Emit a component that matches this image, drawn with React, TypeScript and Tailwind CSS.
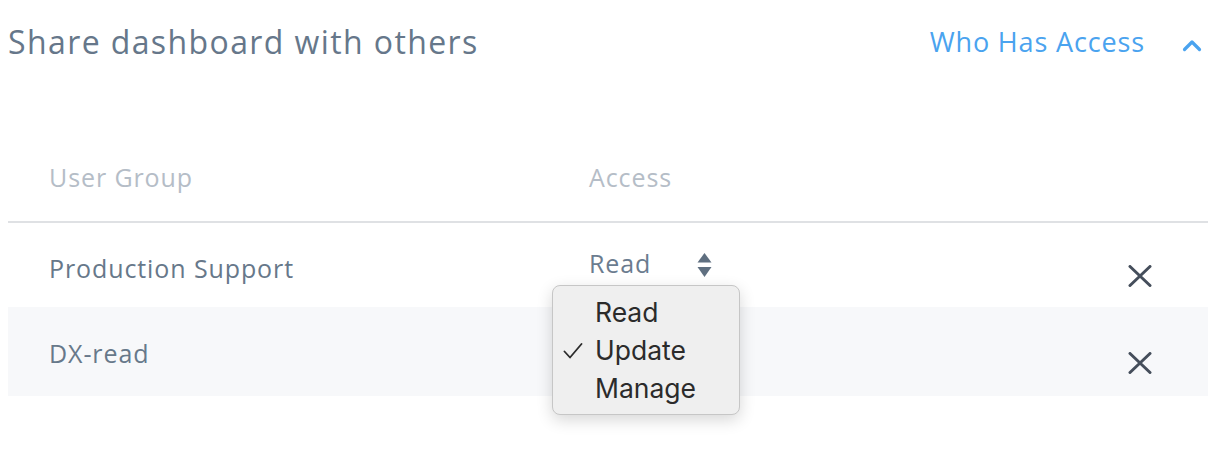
const rows = [
  { group: 'Production Support', textTop: 'pt-[28px]', xTop: 'pt-[42px]', h: 'h-[84px]', bg: 'bg-white' },
  { group: 'DX-read', textTop: 'pt-[29px]', xTop: 'pt-[45px]', h: 'h-[89px]', bg: 'bg-[#f7f8fa]' },
];

function SelectArrows() {
  return (
    <svg width="15" height="24" viewBox="0 0 15 24" className="text-[#5f6f80]">
      <path d="M7.5 0 L14.5 9.5 L0.5 9.5 Z" fill="currentColor" />
      <path d="M0.5 14 L14.5 14 L7.5 24 Z" fill="currentColor" />
    </svg>
  );
}

function CloseIcon() {
  return (
    <svg width="24" height="22" viewBox="0 0 24 22" className="text-[#454e5b]">
      <path d="M2 1.5 L22 20.5 M22 1.5 L2 20.5" stroke="currentColor" strokeWidth="3" strokeLinecap="round" />
    </svg>
  );
}

export default function App() {
  return (
    <div className="w-[1218px] h-[464px] bg-white pl-2 pr-[10px] font-['Open_Sans',sans-serif] relative">
      {/* Header */}
      <div className="flex items-start justify-between h-[88px] pr-[6px]">
        <h1 className="mt-[20px] text-[32px] leading-[44px] text-[#66778a] tracking-[1.4px]">
          Share dashboard with others
        </h1>
        <button className="mt-[23px] flex items-center h-[37px] text-[#4aa3ef] text-[27px] leading-[37px] tracking-[0.85px]">
          Who Has Access
          <svg width="20" height="14" viewBox="0 0 20 14" className="ml-[37px] mt-[7px]">
            <path d="M2.5 11.5 L10 4 L17.5 11.5" fill="none" stroke="currentColor" strokeWidth="3.2" strokeLinecap="round" strokeLinejoin="round" />
          </svg>
        </button>
      </div>

      {/* Table header */}
      <div className="flex pt-[72px] pb-[27px] border-b-2 border-[#dfe1e4] text-[25px] leading-[34px] tracking-[0.9px] text-[#b5bdc7]">
        <div className="pl-[41px] w-[581px]">User Group</div>
        <div>Access</div>
      </div>

      {/* Rows */}
      {rows.map((r, i) => (
        <div key={r.group} className={`flex items-start ${r.h} ${r.bg} text-[25px] leading-[34px] tracking-[0.9px] text-[#67788a]`}>
          <div className={`pl-[41px] w-[581px] ${r.textTop}`}>{r.group}</div>
          <div className="flex-1">
            {i === 0 && (
              <div className="flex items-start text-[#6b7c8f]">
                <span className="pt-[23px]">Read</span>
                <span className="ml-[46px] mt-[30px]">
                  <SelectArrows />
                </span>
              </div>
            )}
          </div>
          <div className={`pr-[56px] ${r.xTop}`}>
            <CloseIcon />
          </div>
        </div>
      ))}

      {/* Native select popup */}
      <div className="absolute left-[552px] top-[285px] w-[188px] h-[130px] rounded-[8px] border border-[#c6c6c6] bg-[#efefef] shadow-[0_5px_16px_rgba(0,0,0,0.16)] font-['Inter',sans-serif] text-[26.5px] leading-[38px] text-[#2b2b2b] pt-[7px]">
        {['Read', 'Update', 'Manage'].map((opt) => (
          <div key={opt} className="relative h-[38px] pl-[42px]">
            {opt === 'Update' && (
              <svg width="20" height="16" viewBox="0 0 20 16" className="absolute left-[10px] top-[12px] text-[#2b2b2b]">
                <path d="M1.5 8.5 L7 14.5 L18.5 1" fill="none" stroke="currentColor" strokeWidth="1.8" strokeLinecap="round" strokeLinejoin="round" />
              </svg>
            )}
            {opt}
          </div>
        ))}
      </div>
    </div>
  );
}
